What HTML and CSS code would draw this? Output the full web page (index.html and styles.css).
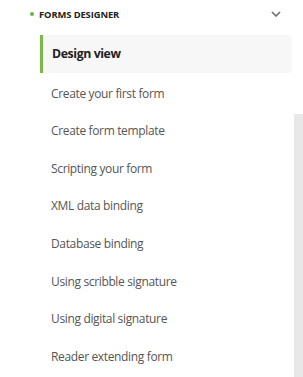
FILE: index.html
```html
<!DOCTYPE html>
<html lang="en">
<head>
    <meta charset="UTF-8">
    <title>Forms designer</title>
    <link rel="stylesheet" href="styles.css">
</head>
<body>
<div class="sidebar">
    <div class="nav">
        <div class="section_head">
            <span class="dot"></span>
            <span class="section_title">FORMS DESIGNER</span>
            <svg class="chevron" width="10" height="6" viewBox="0 0 10 6">
                <path d="M1 1 L5 5 L9 1" fill="none" stroke="#6e6e6e" stroke-width="1.6"/>
            </svg>
        </div>
        <ul class="items">
            <li class="active">Design view</li>
            <li>Create your first form</li>
            <li>Create form template</li>
            <li>Scripting your form</li>
            <li>XML data binding</li>
            <li>Database binding</li>
            <li>Using scribble signature</li>
            <li>Using digital signature</li>
            <li>Reader extending form</li>
        </ul>
    </div>
    <div class="track"></div>
</div>
</body>
</html>
```

FILE: styles.css
```css
*{
    box-sizing: border-box;
}
body{
    margin:0;
    background:#fff;
    font-family: "Open Sans", Arial, sans-serif;
}
.sidebar{
    display:flex;
    width:303px;
    height:377px;
    overflow:hidden;
}
.nav{
    flex:1;
    padding-left:29px;
    padding-right:2px;
}
.section_head{
    display:flex;
    align-items:center;
    height:28px;
    padding-top:0;
}
.dot{
    width:4px;
    height:4px;
    border-radius:50%;
    background:#6fb23f;
    margin-right:5px;
    margin-left:1px;
}
.section_title{
    font-size:9.4px;
    font-weight:700;
    color:#222;
    letter-spacing:-0.1px;
}
.chevron{
    margin-left:auto;
    margin-right:11px;
}
.items{
    list-style:none;
    margin:7px 0 0 11px;
    padding:0;
}
.items li{
    height:37.6px;
    padding-top:4px;
    line-height:33px;
    padding-left:11px;
    font-size:12px;
    color:#555;
    letter-spacing:-0.35px;
}
.items li.active{
    background:#f7f7f7;
    border-left:3px solid #7cb84a;
    border-radius:0 4px 4px 0;
    padding-top:0;
    line-height:37px;
    padding-left:9px;
    font-size:12.3px;
    font-weight:700;
    color:#222;
    letter-spacing:-0.4px;
}
.track{
    width:9px;
    margin-top:114px;
    background:#e8e8e8;
}
```
